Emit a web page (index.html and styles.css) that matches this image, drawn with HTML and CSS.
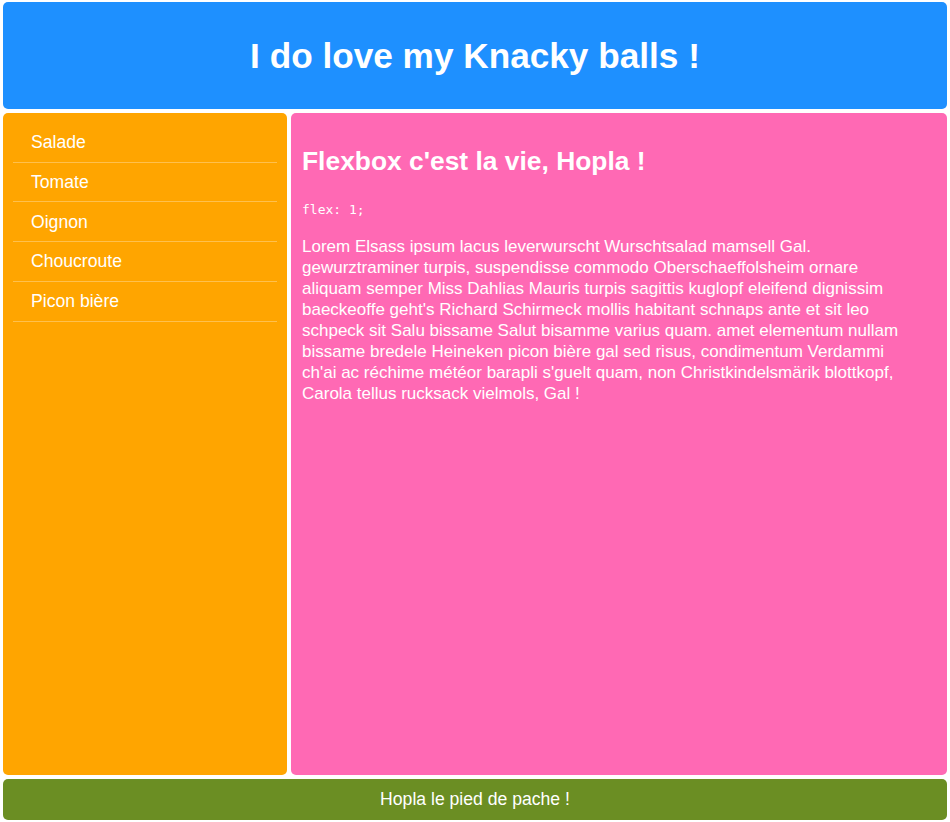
FILE: index.html
```html
<!DOCTYPE html>
<html lang="fr">
<head>
<meta charset="utf-8">
<title>Knacky</title>
<link rel="stylesheet" href="styles.css">
</head>
<body>
<div class="page">
  <header class="header">
    <h1 class="title">I do love my Knacky balls !</h1>
  </header>
  <div class="middle">
    <nav class="sidebar">
      <ul class="menu">
        <li class="menu-item">Salade</li>
        <li class="menu-item">Tomate</li>
        <li class="menu-item">Oignon</li>
        <li class="menu-item">Choucroute</li>
        <li class="menu-item">Picon bière</li>
      </ul>
    </nav>
    <main class="content">
      <h2 class="content-title">Flexbox c'est la vie, Hopla !</h2>
      <div class="code-line"><code class="code">flex: 1;</code></div>
      <p class="text">Lorem Elsass ipsum lacus leverwurscht Wurschtsalad mamsell Gal. gewurztraminer turpis, suspendisse commodo Oberschaeffolsheim ornare aliquam semper Miss Dahlias Mauris turpis sagittis kuglopf eleifend dignissim baeckeoffe geht's Richard Schirmeck mollis habitant schnaps ante et sit leo schpeck sit Salu bissame Salut bisamme varius quam. amet elementum nullam bissame bredele Heineken picon bière gal sed risus, condimentum Verdammi ch'ai ac réchime météor barapli s'guelt quam, non Christkindelsmärik blottkopf, Carola tellus rucksack vielmols, Gal !</p>
    </main>
  </div>
  <footer class="footer">Hopla le pied de pache !</footer>
</div>
</body>
</html>
```
FILE: styles.css
```css
* { box-sizing: border-box; }
html, body { margin: 0; padding: 0; }
body {
  font-family: "Liberation Sans", Arial, sans-serif;
  font-size: 17.6px;
  color: #fff;
  background: #fff;
}
.page {
  height: 822px;
  padding: 2px 3px;
  display: flex;
  flex-direction: column;
  gap: 4px;
}
.header {
  flex: 0 0 107px;
  background: #1E90FF;
  border-radius: 5px;
  display: flex;
  align-items: center;
  justify-content: center;
}
.title {
  margin: 0;
  font-size: 35.2px;
  font-weight: bold;
}
.middle {
  flex: 1;
  display: flex;
  gap: 4px;
  min-height: 0;
}
.sidebar {
  flex: 0 0 284px;
  background: #FFA500;
  border-radius: 5px;
  padding: 10px;
}
.menu {
  list-style: none;
  margin: 0;
  padding: 0;
}
.menu-item {
  line-height: 20.2px;
  padding: 9.25px 18px;
  border-bottom: 1px solid rgba(255, 255, 255, 0.3);
}
.content {
  flex: 1;
  background: #FF69B4;
  border-radius: 5px;
  padding: 10px 27px 10px 11px;
}
.content-title {
  margin: 23px 0 0;
  font-size: 26.4px;
  font-weight: bold;
}
.code-line {
  margin: 25px 0 0;
  font-family: "DejaVu Sans Mono", monospace;
  font-size: 13px;
  line-height: 16px;
}
.code {
  font-family: inherit;
  font-size: inherit;
}
.text {
  margin: 17.5px 0 0;
  font-size: 17px;
  line-height: 21px;
}
.footer {
  flex: 0 0 41px;
  background: #6B8E23;
  border-radius: 5px;
  display: flex;
  align-items: center;
  justify-content: center;
}
```
